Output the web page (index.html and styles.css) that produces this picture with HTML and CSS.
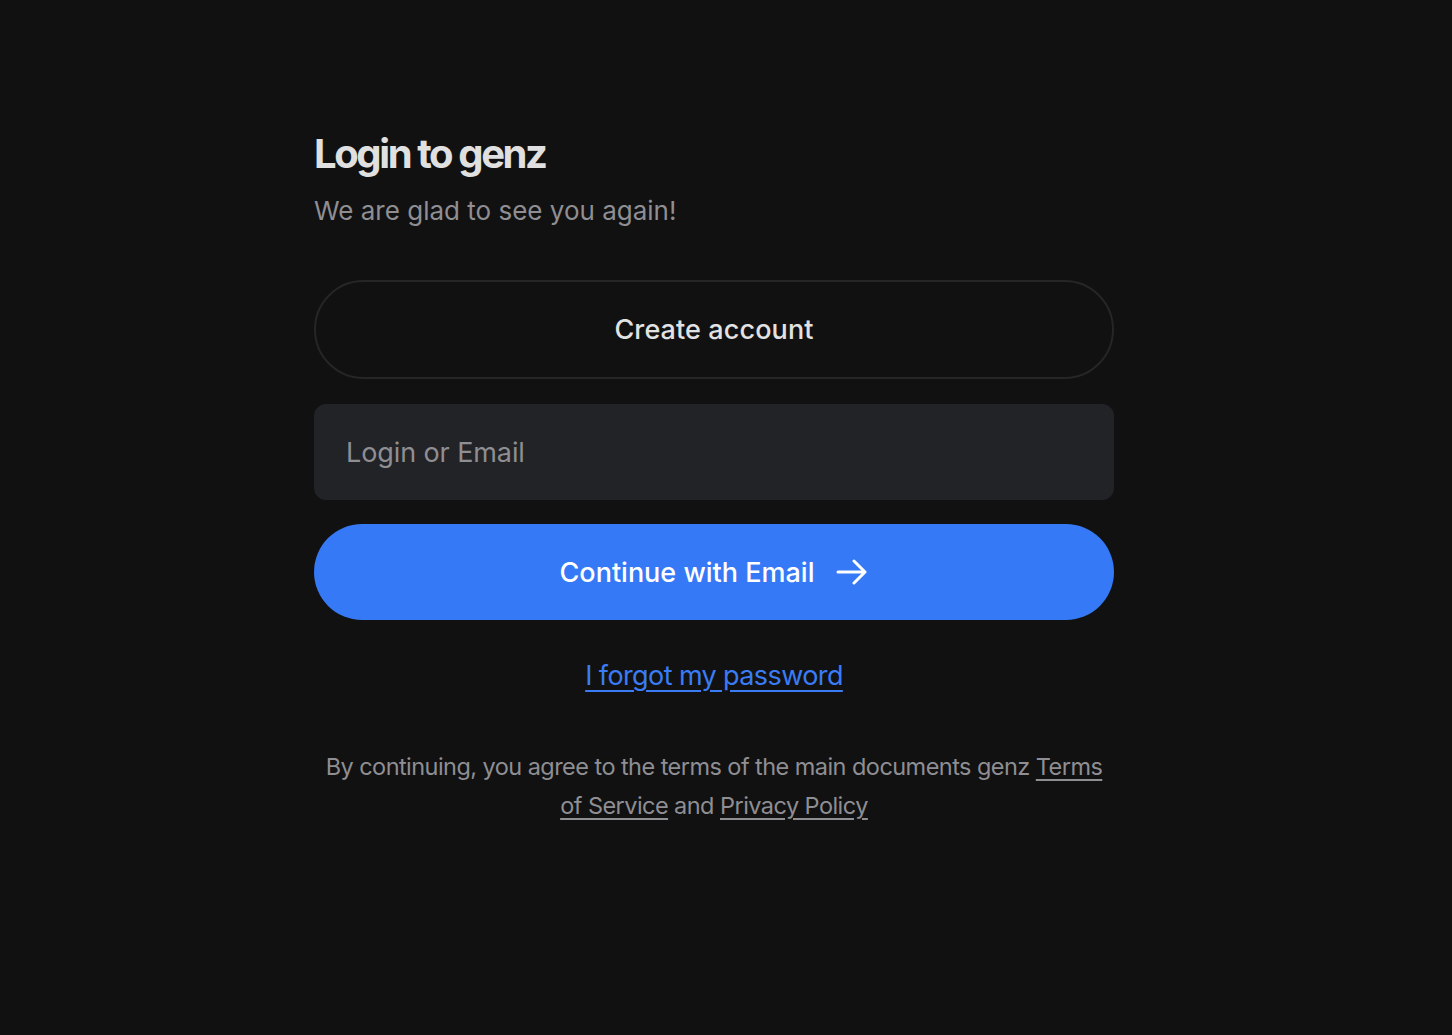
FILE: index.html
```html
<!DOCTYPE html>
<html lang="en">
<head>
<meta charset="utf-8">
<title>Login to genz</title>
<link rel="stylesheet" href="styles.css">
</head>
<body>
<main class="page">
  <section class="card">
    <h1 class="title">Login to genz</h1>
    <p class="subtitle">We are glad to see you again!</p>
    <button class="btn-outline" type="button">Create account</button>
    <input class="field" type="text" placeholder="Login or Email">
    <button class="btn-primary" type="button">
      <span>Continue with Email</span>
      <svg class="arrow" width="32" height="26" viewBox="0 0 32 26" fill="none" stroke="#fff" stroke-width="3" stroke-linecap="round" stroke-linejoin="round"><path d="M2 13h27M18 2l11 11-11 11"/></svg>
    </button>
    <a class="forgot" href="#">I forgot my password</a>
    <p class="terms">By continuing, you agree to the terms of the main documents genz <a href="#">Terms of Service</a> and <a href="#">Privacy Policy</a></p>
  </section>
</main>
</body>
</html>
```
FILE: styles.css
```css
* { box-sizing: border-box; }
html, body { margin: 0; padding: 0; background: #111111; }
body { font-family: Inter, "Noto Sans", sans-serif; color: #e5e5e5; }
.page { display: flex; justify-content: center; padding-top: 128px; padding-right: 24px; }
.card { width: 800px; display: flex; flex-direction: column; }
.title { margin: 0; font-size: 40px; font-weight: 700; letter-spacing: -2.4px; line-height: 52px; color: #e0e0e0; }
.subtitle { margin: 13px 0 0; font-size: 26px; line-height: 36px; color: #8e8e93; letter-spacing: 0; }
.btn-outline { margin-top: 51px; height: 99px; border: 2px solid #262626; border-radius: 50px; background: transparent; color: #e2e2e2; font-family: inherit; font-size: 27px; font-weight: 500; letter-spacing: 0.1px; }
.field { margin-top: 25px; height: 96px; border: none; border-radius: 12px; background: #222327; padding: 0 32px; font-family: inherit; font-size: 27px; color: #e2e2e2; letter-spacing: -0.1px; outline: none; }
.field::placeholder { color: #8e8e93; }
.btn-primary { margin-top: 24px; height: 96px; border: none; border-radius: 48px; background: #3579f6; color: #fff; font-family: inherit; font-size: 27px; font-weight: 500; letter-spacing: 0; display: flex; align-items: center; justify-content: center; gap: 22px; }
.arrow { display: block; }
.forgot { align-self: center; margin-top: 38px; font-size: 27px; line-height: 36px; color: #3b7cf5; text-decoration: underline; text-underline-offset: 5px; letter-spacing: -0.6px; }
.terms { margin: 53px 0 0; text-align: center; font-size: 23.5px; line-height: 39px; color: #8e8e93; letter-spacing: -0.55px; }
.terms a { color: #8e8e93; text-decoration: underline; text-underline-offset: 4px; }
```
